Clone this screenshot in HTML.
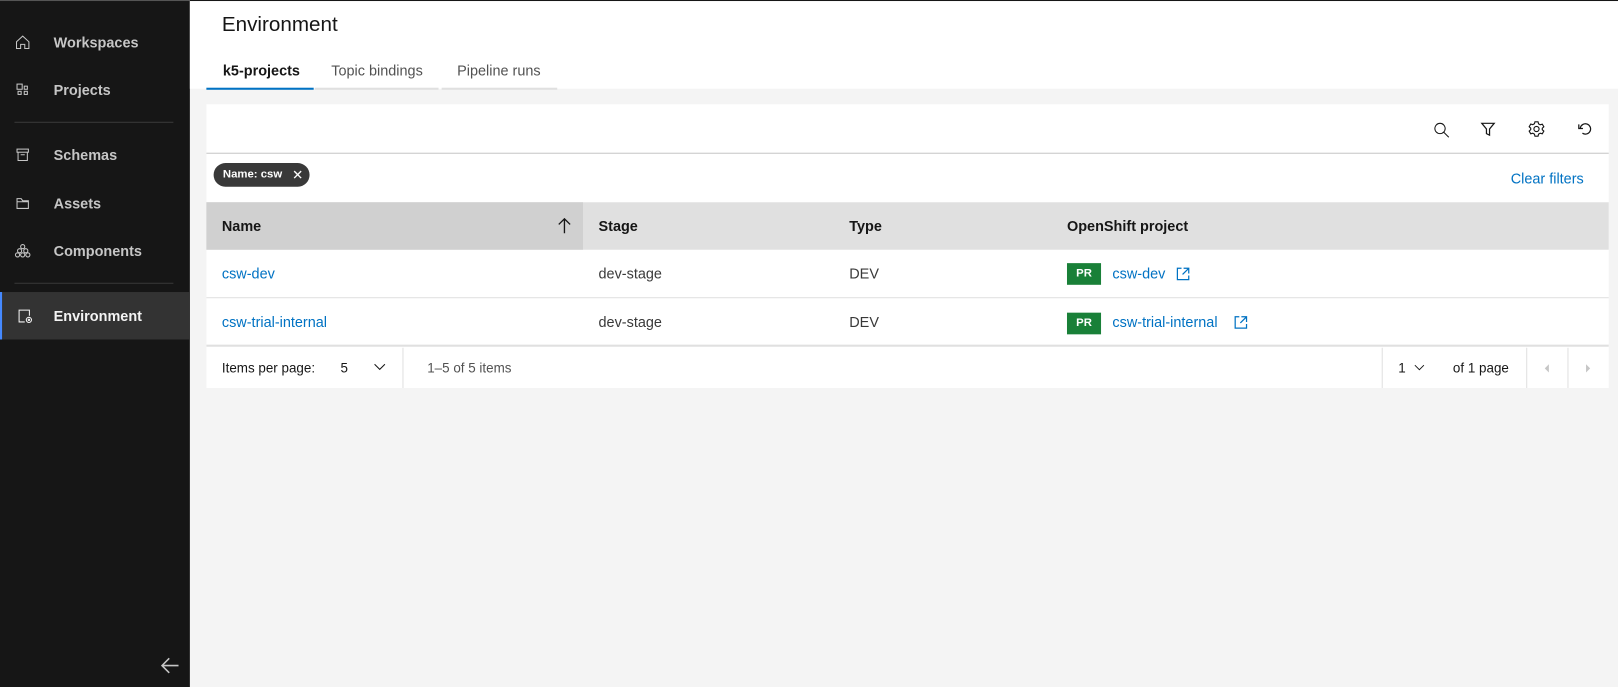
<!DOCTYPE html>
<html><head><style>
*{box-sizing:border-box;margin:0;padding:0}
html,body{width:1618px;height:687px;overflow:hidden;background:#f4f4f4}
#wrap{position:absolute;left:0;top:0;width:1568px;height:666px;transform:scale(1.0319);transform-origin:0 0;font-family:"Liberation Sans",sans-serif;font-size:14px;color:#161616}
.a{position:absolute}
#side{left:0;top:0;width:184px;height:666px;background:#161616;border-top:1px solid #555}
.nav{position:absolute;left:0;width:184px;height:46px;color:#c6c6c6;font-weight:bold;font-size:14px;line-height:46px;padding-left:52px}
.nav svg{position:absolute;left:14px;top:15px}
.sep{position:absolute;left:14px;width:154px;height:1px;background:#393939}
#top{left:184px;top:0;width:1384px;height:86px;background:#fff;border-top:1px solid #161616}
.tab{position:absolute;top:52px;height:34px;border-bottom:2px solid #e0e0e0;color:#525252;font-size:14px;padding-top:7px}
#card{left:200px;top:101px;width:1359px;height:275px;background:#fff}
.link{color:#0072c3}
</style></head><body><div id="wrap">
<div id="side" class="a">
 <div class="nav" style="top:17px"><svg width="16" height="16" viewBox="0 0 16 16" fill="none" stroke="#c6c6c6"><path d="M2 7.5L8 2l6 5.5V14H10V10H6v4H2z"/></svg>Workspaces</div>
 <div class="nav" style="top:63px"><svg width="16" height="16" viewBox="0 0 16 16" fill="none" stroke="#c6c6c6"><rect x="2.5" y="2.5" width="5" height="5"/><rect x="9.5" y="9.5" width="3" height="3"/><rect x="3.5" y="9.5" width="3" height="3"/><rect x="9.5" y="4.5" width="3" height="3"/></svg>Projects</div>
 <div class="sep" style="top:117px"></div>
 <div class="nav" style="top:126px"><svg width="16" height="16" viewBox="0 0 16 16" fill="none" stroke="#c6c6c6"><rect x="2.5" y="2.5" width="11" height="3"/><path d="M3.5 5.5v8h9v-8M6 8h4"/></svg>Schemas</div>
 <div class="nav" style="top:173px"><svg width="16" height="16" viewBox="0 0 16 16" fill="none" stroke="#c6c6c6"><path d="M2.5 3.5h4l1.5 2h5.5v7.5h-11zM2.5 6.5h11"/></svg>Assets</div>
 <div class="nav" style="top:219px"><svg width="16" height="16" viewBox="0 0 16 16" fill="none" stroke="#c6c6c6"><circle cx="8" cy="4" r="2"/><circle cx="5" cy="8" r="2"/><circle cx="11" cy="8" r="2"/><circle cx="3" cy="12" r="2"/><circle cx="8" cy="12" r="2"/><circle cx="13" cy="12" r="2"/></svg>Components</div>
 <div class="sep" style="top:273px"></div>
 <div class="nav" style="top:282px;background:#333;color:#f4f4f4;border-left:2px solid #4589ff;padding-left:50px"><svg width="16" height="16" viewBox="0 0 16 16" fill="none" stroke="#f4f4f4" style="left:14px"><path d="M8 14H2.5V2.5h10V8"/><circle cx="12" cy="12" r="2.5"/><circle cx="12" cy="12" r=".7"/></svg>Environment</div>
 <svg class="a" style="left:155px;top:635px" width="20" height="18" viewBox="0 0 20 18" fill="none" stroke="#c6c6c6" stroke-width="1.5"><path d="M18 9H2M9 2L2 9l7 7"/></svg>
</div>
<div id="top" class="a">
 <div class="a" style="left:31px;top:12px;font-size:20px;color:#161616">Environment</div>
 <div class="tab" style="left:16px;width:104px;border-bottom-color:#0072c3;color:#161616;font-weight:bold;padding-left:16px">k5-projects</div>
 <div class="tab" style="left:121px;width:120px;padding-left:16px">Topic bindings</div>
 <div class="tab" style="left:244px;width:112px;padding-left:15px">Pipeline runs</div>
</div>
<div id="card" class="a">
 <svg class="a" style="left:1188px;top:16px" width="18" height="18" viewBox="0 0 18 18" fill="none" stroke="#161616"><circle cx="7.5" cy="7.5" r="5"/><path d="M11 11l5 5"/></svg>
 <svg class="a" style="left:1234px;top:16px" width="16" height="16" viewBox="0 0 16 16" fill="none" stroke="#161616" stroke-width="1.2"><path d="M2 2.5h12L9.5 8v6l-3-1.5V8z"/></svg>
 <svg class="a" style="left:1280px;top:15px" width="18" height="18" viewBox="0 0 18 18" fill="none" stroke="#161616" stroke-width="1.1"><path d="M7.5 2h3l.5 2 1.6.9 2-.6 1.5 2.6-1.5 1.4v1.4l1.5 1.4-1.5 2.6-2-.6-1.6.9-.5 2h-3l-.5-2-1.6-.9-2 .6L1.9 11l1.5-1.4V8.2L1.9 6.8 3.4 4.2l2 .6L7 3.9z"/><circle cx="9" cy="9" r="2.5"/></svg>
 <svg class="a" style="left:1328px;top:16px" width="16" height="16" viewBox="0 0 16 16" fill="none" stroke="#161616" stroke-width="1.2"><path d="M3.5 7a5 5 0 1 1 2 5M2 3.5v4h4"/></svg>
 <div class="a" style="left:0;top:47px;width:1359px;height:1px;background:#c6c6c6"></div>
 <div class="a" style="left:7px;top:57px;height:23px;width:93px;border-radius:12px;background:#393939;color:#fff;font-size:11px;font-weight:bold;line-height:23px;padding-left:9px">Name: csw<span style="position:absolute;left:76px;font-weight:normal;font-size:13px">✕</span></div>
 <div class="a link" style="left:1264px;top:64px">Clear filters</div>
 <div class="a" style="left:0;top:95px;width:1359px;height:46px;background:#e0e0e0;font-weight:bold;line-height:46px">
  <div class="a" style="left:0;top:0;width:365px;height:46px;background:#d0d0d0;padding-left:15px">Name</div>
  <svg class="a" style="left:340px;top:15px" width="14" height="16" viewBox="0 0 14 16" fill="none" stroke="#161616" stroke-width="1.3"><path d="M7 15V1M1.5 6.5L7 1l5.5 5.5"/></svg>
  <div class="a" style="left:380px">Stage</div><div class="a" style="left:623px">Type</div><div class="a" style="left:834px">OpenShift project</div>
 </div>
 <div class="a" style="left:0;top:141px;width:1359px;height:47px;border-bottom:1px solid #e0e0e0;line-height:46px">
  <div class="a link" style="left:15px">csw-dev</div><div class="a" style="left:380px;color:#393939">dev-stage</div><div class="a" style="left:623px;color:#393939">DEV</div>
  <div class="a" style="left:834px;top:13px;width:33px;height:21px;background:#198038;color:#fff;font-size:11px;font-weight:bold;line-height:21px;text-align:center">PR</div>
  <div class="a link" style="left:878px">csw-dev</div>
  <svg class="a" style="left:940px;top:17px" width="13" height="13" viewBox="0 0 13 13" fill="none" stroke="#0072c3" stroke-width="1.2"><path d="M5 1H1v11h11V8M7 1h5v5M12 1L6 7"/></svg>
 </div>
 <div class="a" style="left:0;top:188px;width:1359px;height:47px;border-bottom:2px solid #e0e0e0;line-height:47px">
  <div class="a link" style="left:15px">csw-trial-internal</div><div class="a" style="left:380px;color:#393939">dev-stage</div><div class="a" style="left:623px;color:#393939">DEV</div>
  <div class="a" style="left:834px;top:14px;width:33px;height:21px;background:#198038;color:#fff;font-size:11px;font-weight:bold;line-height:21px;text-align:center">PR</div>
  <div class="a link" style="left:878px">csw-trial-internal</div>
  <svg class="a" style="left:996px;top:17px" width="13" height="13" viewBox="0 0 13 13" fill="none" stroke="#0072c3" stroke-width="1.2"><path d="M5 1H1v11h11V8M7 1h5v5M12 1L6 7"/></svg>
 </div>
 <div class="a" style="left:0;top:236px;width:1359px;height:39px;line-height:39px;font-size:13px">
  <div class="a" style="left:15px">Items per page:</div><div class="a" style="left:130px">5</div>
  <svg class="a" style="left:162px;top:15px" width="12" height="8" viewBox="0 0 12 8" fill="none" stroke="#161616"><path d="M1 1l5 5 5-5"/></svg>
  <div class="a" style="left:190px;top:0;width:1px;height:39px;background:#e0e0e0"></div>
  <div class="a" style="left:214px;color:#525252">1–5 of 5 items</div>
  <div class="a" style="left:1139px;top:0;width:1px;height:39px;background:#e0e0e0"></div>
  <div class="a" style="left:1155px">1</div>
  <svg class="a" style="left:1170px;top:16px" width="11" height="7" viewBox="0 0 12 8" fill="none" stroke="#161616"><path d="M1 1l5 5 5-5"/></svg>
  <div class="a" style="left:1208px">of 1 page</div>
  <div class="a" style="left:1279px;top:0;width:1px;height:39px;background:#e0e0e0"></div>
  <div class="a" style="left:1319px;top:0;width:1px;height:39px;background:#e0e0e0"></div>
  <div class="a" style="left:1297px;top:16px;width:0;height:0;border:4px solid transparent;border-right-color:#c6c6c6;border-left:0"></div>
  <div class="a" style="left:1337px;top:16px;width:0;height:0;border:4px solid transparent;border-left-color:#c6c6c6;border-right:0"></div>
 </div>
</div>
</div></body></html>
